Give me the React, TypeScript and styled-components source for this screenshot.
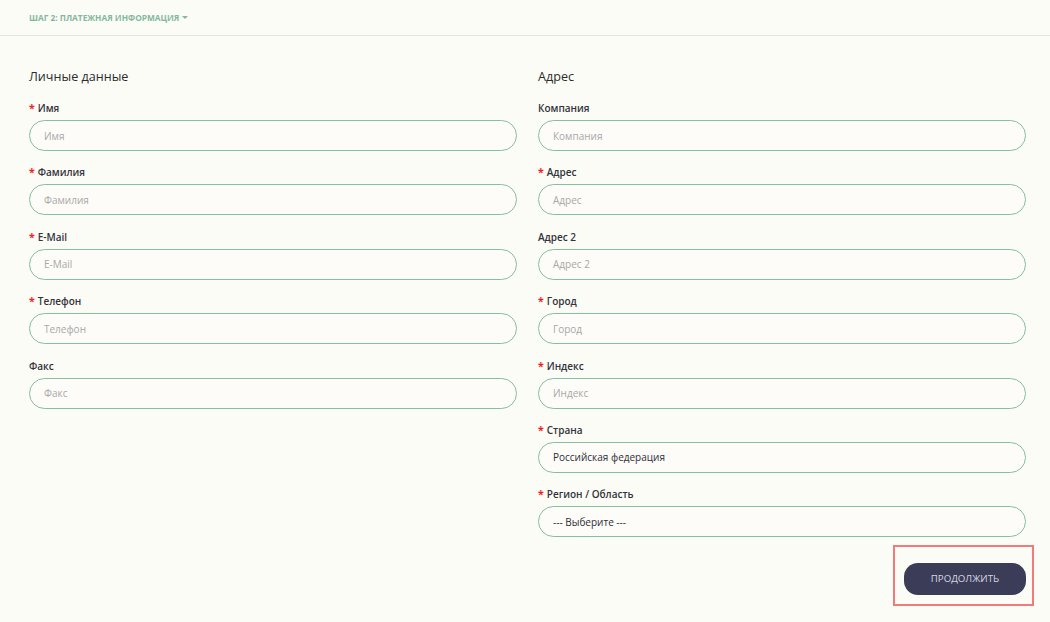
import React from "react";
import styled, { createGlobalStyle } from "styled-components";

const Global = createGlobalStyle`
  html, body { margin: 0; padding: 0; background: #fcfcf7; }
  body { font-family: "Open Sans", "Noto Sans", sans-serif; color: #333; }
  * { box-sizing: border-box; }
`;

const Page = styled.div`
  width: 1050px;
  min-height: 622px;
  background: #fcfcf7;
`;

const StepBar = styled.div`
  height: 36px;
  border-bottom: 1px solid #e3e3df;
  display: flex;
  align-items: center;
  padding-left: 29px;
`;

const StepTitle = styled.span`
  font-size: 8.3px;
  font-weight: 700;
  color: #83b89e;
  text-transform: uppercase;
  display: inline-flex;
  align-items: center;
  gap: 3px;
`;

const Caret = styled.span`
  width: 0;
  height: 0;
  border-left: 3px solid transparent;
  border-right: 3px solid transparent;
  border-top: 3px solid #83b89e;
`;

const Body = styled.div`
  padding: 31px 24px 0 29px;
`;

const Columns = styled.div`
  display: grid;
  grid-template-columns: 1fr 1fr;
  column-gap: 21px;
`;

const Column = styled.div`
  display: flex;
  flex-direction: column;
`;

const SectionTitle = styled.h3`
  margin: 0 0 14px;
  font-size: 12.6px;
  line-height: 20px;
  font-weight: 400;
  color: #2b2b2b;
`;

const Field = styled.div`
  display: flex;
  flex-direction: column;
  gap: 5px;
  margin-bottom: 14.4px;
`;

const Label = styled.label`
  display: flex;
  align-items: center;
  height: 14px;
  font-size: 10px;
  line-height: 14px;
  font-weight: 600;
  color: #33333a;
`;

const Star = styled.span`
  color: #ee1c1c;
  font-weight: 700;
  font-size: 10.5px;
  line-height: 14px;
  margin-right: 3px;
`;

const Input = styled.div<{ $filled?: boolean }>`
  height: 31px;
  flex: none;
  border: 1px solid #86bea1;
  border-radius: 16px;
  background: #fdfcf9;
  display: flex;
  align-items: center;
  padding-left: 14px;
  font-size: 10px;
  color: ${(p) => (p.$filled ? "#2e2e35" : "#a8a8a8")};
`;

const ActionRow = styled.div`
  display: flex;
  justify-content: flex-end;
  margin-top: -7px;
  margin-right: -8px;
`;

const Highlight = styled.div`
  border: 2px solid #f47a7a;
  padding: 16px 6px 9px 9px;
`;

const Button = styled.button`
  width: 122px;
  height: 32px;
  border: none;
  border-radius: 14px;
  background: #3b3d58;
  color: #d6d6e0;
  font-family: "Open Sans", "Noto Sans", sans-serif;
  font-size: 9.7px;
  text-transform: uppercase;
  cursor: pointer;
  display: block;
`;

type F = { label: string; required?: boolean; value?: string };

const personal: F[] = [
  { label: "Имя", required: true },
  { label: "Фамилия", required: true },
  { label: "E-Mail", required: true },
  { label: "Телефон", required: true },
  { label: "Факс" },
];

const address: F[] = [
  { label: "Компания" },
  { label: "Адрес", required: true },
  { label: "Адрес 2" },
  { label: "Город", required: true },
  { label: "Индекс", required: true },
  { label: "Страна", required: true, value: "Российская федерация" },
  { label: "Регион / Область", required: true, value: "--- Выберите ---" },
];

const FieldView = ({ f }: { f: F }) => (
  <Field>
    <Label>
      {f.required && <Star>*</Star>}
      {f.label}
    </Label>
    <Input $filled={!!f.value}>{f.value ?? f.label}</Input>
  </Field>
);

export default function App() {
  return (
    <Page>
      <Global />
      <StepBar>
        <StepTitle>
          Шаг 2: Платежная информация <Caret />
        </StepTitle>
      </StepBar>
      <Body>
        <Columns>
          <Column>
            <SectionTitle>Личные данные</SectionTitle>
            {personal.map((f) => (
              <FieldView key={f.label} f={f} />
            ))}
          </Column>
          <Column>
            <SectionTitle>Адрес</SectionTitle>
            {address.map((f) => (
              <FieldView key={f.label} f={f} />
            ))}
            <ActionRow>
              <Highlight>
                <Button>Продолжить</Button>
              </Highlight>
            </ActionRow>
          </Column>
        </Columns>
      </Body>
    </Page>
  );
}
